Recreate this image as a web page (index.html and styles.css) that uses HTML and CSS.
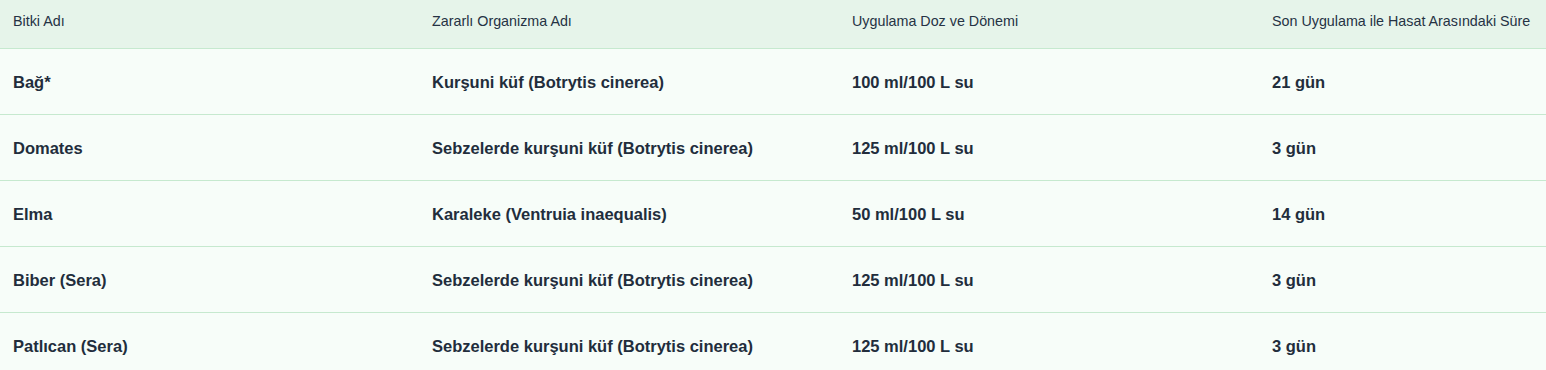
FILE: index.html
```html
<!DOCTYPE html>
<html lang="tr">
<head>
<meta charset="utf-8">
<link rel="stylesheet" href="styles.css">
</head>
<body>
<table class="dose-table">
  <colgroup>
    <col class="c1"><col class="c2"><col class="c3"><col class="c4">
  </colgroup>
  <thead>
    <tr>
      <th>Bitki Adı</th>
      <th>Zararlı Organizma Adı</th>
      <th>Uygulama Doz ve Dönemi</th>
      <th>Son Uygulama ile Hasat Arasındaki Süre</th>
    </tr>
  </thead>
  <tbody>
    <tr><td>Bağ*</td><td>Kurşuni küf (Botrytis cinerea)</td><td>100 ml/100 L su</td><td>21 gün</td></tr>
    <tr><td>Domates</td><td>Sebzelerde kurşuni küf (Botrytis cinerea)</td><td>125 ml/100 L su</td><td>3 gün</td></tr>
    <tr><td>Elma</td><td>Karaleke (Ventruia inaequalis)</td><td>50 ml/100 L su</td><td>14 gün</td></tr>
    <tr><td>Biber (Sera)</td><td>Sebzelerde kurşuni küf (Botrytis cinerea)</td><td>125 ml/100 L su</td><td>3 gün</td></tr>
    <tr><td>Patlıcan (Sera)</td><td>Sebzelerde kurşuni küf (Botrytis cinerea)</td><td>125 ml/100 L su</td><td>3 gün</td></tr>
  </tbody>
</table>
</body>
</html>
```

FILE: styles.css
```css
html, body {
  margin: 0;
  padding: 0;
  background: #f7fdf9;
}
body {
  font-family: "Liberation Sans", Arial, sans-serif;
  color: #1e293b;
}
.dose-table {
  width: 1546px;
  border-collapse: collapse;
  table-layout: fixed;
}
.c1 { width: 419px; }
.c2 { width: 420px; }
.c3 { width: 420px; }
.c4 { width: 287px; }
.dose-table th {
  background: #e6f4ea;
  font-size: 14.3px;
  font-weight: normal;
  color: #253244;
  text-align: left;
  height: 48px;
  padding: 0 13px 5px;
  vertical-align: middle;
  border-bottom: 1px solid #c6e9cf;
  box-sizing: border-box;
  white-space: nowrap;
}
.dose-table td {
  height: 66px;
  box-sizing: border-box;
  padding: 3px 13px 0;
  font-size: 16.5px;
  font-weight: bold;
  color: #222d3c;
  border-bottom: 1px solid #c6e9cf;
  vertical-align: middle;
}
```
